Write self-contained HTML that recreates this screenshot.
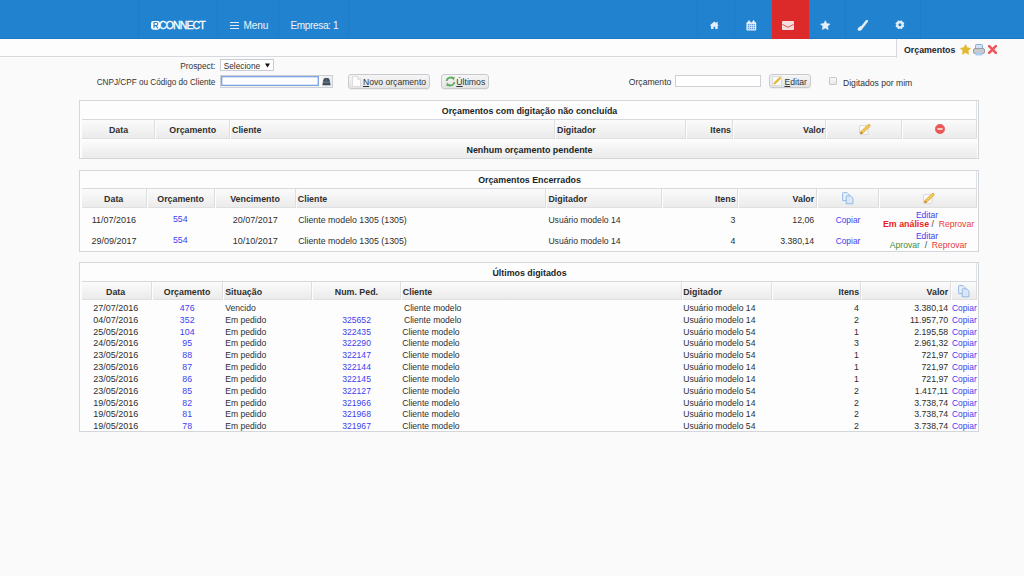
<!DOCTYPE html>
<html><head><meta charset="utf-8"><title>Orçamentos</title>
<style>
html,body{margin:0;padding:0}
body{width:1024px;height:576px;overflow:hidden;position:relative;background:#fafafa;font-family:"Liberation Sans",sans-serif;color:#2e2e2e}
.a{position:absolute;white-space:nowrap;margin:0}
u{text-decoration:underline}
</style></head><body>
<div class="a" style="left:0px;top:0px;width:1024px;height:39px;background:#2183cf"></div>
<div class="a" style="left:0px;top:38px;width:1024px;height:1px;background:#1c78c4"></div>
<div class="a" style="left:138px;top:0px;width:1px;height:38px;background:#1e7dc8"></div>
<div class="a" style="left:217px;top:0px;width:1px;height:38px;background:#1e7dc8"></div>
<div class="a" style="left:278px;top:0px;width:1px;height:38px;background:#1e7dc8"></div>
<div class="a" style="left:348px;top:0px;width:1px;height:38px;background:#1e7dc8"></div>
<div class="a" style="left:697px;top:0px;width:1px;height:38px;background:#1e7dc8"></div>
<div class="a" style="left:734px;top:0px;width:1px;height:38px;background:#1e7dc8"></div>
<div class="a" style="left:845px;top:0px;width:1px;height:38px;background:#1e7dc8"></div>
<div class="a" style="left:920px;top:0px;width:1px;height:38px;background:#1e7dc8"></div>
<div class="a" style="left:772px;top:0px;width:37px;height:39px;background:#dc2a2a"></div>
<svg class="a" style="left:151px;top:20.8px" width="9" height="9" viewBox="0 0 9 9"><rect x="0" y="0" width="9" height="8.7" rx="2.4" fill="#fff"/><path d="M3 7.3 V1.5 H5.1 Q6.8 1.5 6.8 3.1 Q6.8 4.6 5.1 4.6 H3 M5 4.6 L6.9 7.3" stroke="#2183cf" stroke-width="1.15" fill="none"/></svg>
<div class="a" style="top:19.30px;font-size:10.60px;line-height:12px;color:#fff;left:159.00px;letter-spacing:-0.95px;-webkit-text-stroke:0.3px #fff;">CONNECT</div>
<div class="a" style="left:229.5px;top:21.9px;width:9.2px;height:1.3px;background:#dfeaf6"></div>
<div class="a" style="left:229.5px;top:24.9px;width:9.2px;height:1.3px;background:#dfeaf6"></div>
<div class="a" style="left:229.5px;top:27.9px;width:9.2px;height:1.3px;background:#dfeaf6"></div>
<div class="a" style="top:19.50px;font-size:10.10px;line-height:12px;color:#eef3f9;left:243.50px;letter-spacing:-0.15px;">Menu</div>
<div class="a" style="top:19.50px;font-size:10.10px;line-height:12px;color:#eef3f9;left:290.50px;letter-spacing:-0.4px;">Empresa: 1</div>
<svg class="a" style="left:709px;top:21px" width="10" height="9" viewBox="0 0 10 9"><path d="M0.6 4.5 L5.3 0.5 L9.8 4.5 L8.7 4.5 L8.7 8 L6.2 8 L6.2 5.8 L4.5 5.8 L4.5 8 L2 8 L2 4.5 Z" fill="#e4eef8"/><rect x="7.2" y="1" width="1.4" height="2.6" fill="#e4eef8"/></svg>
<svg class="a" style="left:746px;top:20px" width="11" height="11" viewBox="0 0 11 11"><rect x="0.4" y="2.4" width="9.8" height="8.2" rx="0.8" fill="#e4eef8"/><path d="M1.2 3 L3 0.4 L4.8 3 Z M5.8 3 L7.6 0.4 L9.4 3 Z" fill="#e4eef8" stroke="#e4eef8" stroke-width="0.8" stroke-linejoin="round"/><g fill="#5a9be0"><rect x="1.75" y="3.95" width="1.3" height="1.3"/><rect x="1.75" y="5.95" width="1.3" height="1.3"/><rect x="1.75" y="7.95" width="1.3" height="1.3"/><rect x="3.65" y="3.95" width="1.3" height="1.3"/><rect x="3.65" y="5.95" width="1.3" height="1.3"/><rect x="3.65" y="7.95" width="1.3" height="1.3"/><rect x="5.65" y="3.95" width="1.3" height="1.3"/><rect x="5.65" y="5.95" width="1.3" height="1.3"/><rect x="5.65" y="7.95" width="1.3" height="1.3"/><rect x="7.65" y="3.95" width="1.3" height="1.3"/><rect x="7.65" y="5.95" width="1.3" height="1.3"/><rect x="7.65" y="7.95" width="1.3" height="1.3"/></g></svg>
<svg class="a" style="left:782px;top:21px" width="12" height="9" viewBox="0 0 12 9"><rect x="0" y="0" width="12" height="9" rx="1" fill="#f6dede"/><path d="M0.4 3.4 L6.2 6.3 L11.6 3.4" stroke="#e25050" stroke-width="1" fill="none"/></svg>
<svg class="a" style="left:820px;top:20.3px" width="11" height="11" viewBox="0 0 11 11"><path d="M5.30 0.70 L6.77 3.58 L9.96 4.09 L7.68 6.37 L8.18 9.56 L5.30 8.10 L2.42 9.56 L2.92 6.37 L0.64 4.09 L3.83 3.58 Z" fill="#e4eef8" stroke="#e4eef8" stroke-width="0.6" stroke-linejoin="round"/></svg>
<svg class="a" style="left:857px;top:20px" width="11" height="11" viewBox="0 0 11 11"><path d="M9.9 1.1 L5.6 6.6" stroke="#e4eef8" stroke-width="2.5" stroke-linecap="round"/><ellipse cx="3.3" cy="8.4" rx="2.9" ry="1.9" transform="rotate(-38 3.3 8.4)" fill="#e4eef8"/></svg>
<svg class="a" style="left:895px;top:20px" width="10" height="10" viewBox="0 0 10 10"><g transform="translate(4.9 4.75)"><circle r="3.7" fill="#e4eef8"/><rect x="-0.95" y="-4.45" width="1.9" height="1.4" rx="0.5" fill="#e4eef8" transform="rotate(22)"/><rect x="-0.95" y="-4.45" width="1.9" height="1.4" rx="0.5" fill="#e4eef8" transform="rotate(67)"/><rect x="-0.95" y="-4.45" width="1.9" height="1.4" rx="0.5" fill="#e4eef8" transform="rotate(112)"/><rect x="-0.95" y="-4.45" width="1.9" height="1.4" rx="0.5" fill="#e4eef8" transform="rotate(157)"/><rect x="-0.95" y="-4.45" width="1.9" height="1.4" rx="0.5" fill="#e4eef8" transform="rotate(202)"/><rect x="-0.95" y="-4.45" width="1.9" height="1.4" rx="0.5" fill="#e4eef8" transform="rotate(247)"/><rect x="-0.95" y="-4.45" width="1.9" height="1.4" rx="0.5" fill="#e4eef8" transform="rotate(292)"/><rect x="-0.95" y="-4.45" width="1.9" height="1.4" rx="0.5" fill="#e4eef8" transform="rotate(337)"/><circle r="1.55" fill="#2183cf"/></g></svg>
<div class="a" style="left:0px;top:39px;width:896px;height:17px;background:#fdfdfd"></div>
<div class="a" style="left:0px;top:56px;width:896px;height:1px;background:#d6d9dd"></div>
<div class="a" style="left:0px;top:57px;width:896px;height:1px;background:#fdfdfd"></div>
<div class="a" style="left:896px;top:39px;width:1px;height:19px;background:#d6d9dd"></div>
<div class="a" style="top:44.00px;font-size:8.80px;line-height:12px;font-weight:700;color:#1e2430;left:904.00px;">Orçamentos</div>
<svg class="a" style="left:960px;top:44px" width="11" height="11" viewBox="0 0 11 11"><path d="M5.50 0.60 L7.09 3.72 L10.54 4.26 L8.07 6.73 L8.62 10.19 L5.50 8.60 L2.38 10.19 L2.93 6.73 L0.46 4.26 L3.91 3.72 Z" fill="#e2b934" stroke="#e2b934" stroke-width="0.7" stroke-linejoin="round"/></svg>
<svg class="a" style="left:973px;top:44px" width="12" height="12" viewBox="0 0 12 12"><rect x="2.5" y="0.5" width="7" height="5" rx="1" fill="#cfe2f6" stroke="#6e9fce" stroke-width="0.8"/><rect x="0.5" y="4.5" width="11" height="5" rx="1.5" fill="#c6c9cd" stroke="#8a8f95" stroke-width="0.8"/><rect x="2.5" y="9" width="7" height="2.5" fill="#a9cdf0"/></svg>
<svg class="a" style="left:988px;top:45px" width="9" height="9" viewBox="0 0 9 9"><path d="M1.2 1.2 L7.8 7.8 M7.8 1.2 L1.2 7.8" stroke="#f2545c" stroke-width="2.6" stroke-linecap="square"/></svg>
<div class="a" style="top:60.00px;font-size:8.30px;line-height:12px;color:#333;right:808.70px;">Prospect:</div>
<div class="a" style="left:220px;top:59px;width:54px;height:12px;background:#fff;border:1px solid #c9ccd0;box-sizing:border-box"></div>
<div class="a" style="top:60.00px;font-size:8.30px;line-height:12px;left:223.70px;">Selecione</div>
<svg class="a" style="left:265px;top:63px" width="5" height="5" viewBox="0 0 5 5"><path d="M0 0.5 H5 L2.5 4.5 Z" fill="#111"/></svg>
<div class="a" style="top:76.50px;font-size:8.20px;line-height:12px;color:#333;right:808.60px;">CNPJ/CPF ou Código do Cliente</div>
<div class="a" style="left:220px;top:75px;width:113px;height:13px;background:linear-gradient(90deg,#fbfbfb 0,#fbfbfb 2px,#efefef 2px);border:1px solid #cdd0d4;box-sizing:border-box"></div>
<div class="a" style="left:221px;top:76px;width:98px;height:10px;background:#fff;border:1px solid #7ea6e0;box-shadow:inset 0 0 0 0.6px #a9c4ee;box-sizing:border-box"></div>
<div class="a" style="left:319px;top:76px;width:3px;height:11px;background:#fbfbfb"></div>
<svg class="a" style="left:322px;top:77px" width="9" height="9" viewBox="0 0 9 9"><path d="M1.2 3.4 Q1.6 1 3.6 1 L5.4 1 Q7.4 1 7.8 3.4 L8.6 8.2 L0.4 8.2 Z" fill="#3f4b5a"/><rect x="0.9" y="4.6" width="7.2" height="1.1" fill="#6f8aa0"/><rect x="3.8" y="2" width="1.4" height="5" fill="#55677a"/></svg>
<div class="a" style="left:348px;top:74px;width:82px;height:15px;box-sizing:border-box;border:1px solid #c8cacc;border-radius:3px;background:linear-gradient(#f6f6f6,#e4e4e4);box-shadow:0 1px 0 #eee"></div>
<svg class="a" style="left:352px;top:76px" width="9" height="11" viewBox="0 0 9 11"><path d="M0.5 0.5 H5.6 L8.5 3.4 V10.5 H0.5 Z" fill="#fdfdfd" stroke="#d9d9d9" stroke-width="0.9"/><path d="M5.6 0.5 V3.4 H8.5" fill="#eee" stroke="#d9d9d9" stroke-width="0.8"/></svg>
<div class="a" style="top:76.00px;font-size:8.60px;line-height:12px;color:#333;left:363.00px;"><u>N</u>ovo orçamento</div>
<div class="a" style="left:441px;top:74px;width:48px;height:15px;box-sizing:border-box;border:1px solid #c8cacc;border-radius:3px;background:linear-gradient(#f6f6f6,#e4e4e4);box-shadow:0 1px 0 #eee"></div>
<svg class="a" style="left:445px;top:76px" width="11" height="11" viewBox="0 0 11 11"><path d="M1.6 5 A3.8 3.8 0 0 1 7.8 2.4" stroke="#62b062" stroke-width="2" fill="none"/><path d="M6.2 0.4 L10 1.2 L8.6 4.8 Z" fill="#62b062"/><path d="M9.4 6 A3.8 3.8 0 0 1 3.2 8.6" stroke="#62b062" stroke-width="2" fill="none"/><path d="M4.8 10.6 L1 9.8 L2.4 6.2 Z" fill="#62b062"/></svg>
<div class="a" style="top:76.00px;font-size:8.70px;line-height:12px;color:#333;left:456.30px;"><u>Ú</u>ltimos</div>
<div class="a" style="top:76.00px;font-size:8.60px;line-height:12px;color:#333;right:352.70px;">Orçamento</div>
<div class="a" style="left:675px;top:75px;width:86px;height:12px;background:#fff;border:1px solid #cdd0d4;box-sizing:border-box"></div>
<div class="a" style="left:769px;top:74px;width:42px;height:14px;box-sizing:border-box;border:1px solid #c8cacc;border-radius:3px;background:linear-gradient(#f6f6f6,#e4e4e4);box-shadow:0 1px 0 #eee"></div>
<svg class="a" style="left:772px;top:76px" width="10" height="10" viewBox="0 0 10 10"><rect x="0.5" y="0.5" width="9" height="9" fill="#fbfbfb" stroke="#d6d6d6" stroke-width="0.8"/><path d="M2 8 L8.5 1.5" stroke="#e5b93a" stroke-width="2.4"/></svg>
<div class="a" style="top:75.50px;font-size:8.60px;line-height:12px;color:#333;left:784.50px;"><u>E</u>ditar</div>
<div class="a" style="left:829px;top:77px;width:8px;height:8px;background:linear-gradient(#fafafa,#e8e8e8);border:1px solid #c8c8c8;border-radius:1px;box-sizing:border-box"></div>
<div class="a" style="top:77.00px;font-size:8.60px;line-height:12px;color:#333;left:843.00px;">Digitados por mim</div>
<div class="a" style="left:79px;top:100px;width:900px;height:59px;background:#fdfdfd;border:1px solid #d3d7dc;box-sizing:border-box"></div>
<div class="a" style="left:82px;top:101px;width:895px;height:19px;background:#fdfdfd;border-right:1px solid #dfe2e6;border-bottom:1px solid #d6dade;box-sizing:border-box"></div>
<div class="a" style="top:105.00px;font-size:8.85px;line-height:12px;font-weight:700;color:#1b1f26;left:229.50px;width:600px;text-align:center;">Orçamentos com digitação não concluída</div>
<div class="a" style="left:82px;top:120px;width:73px;height:19px;background:linear-gradient(#fbfbfb,#ebebeb);border-right:1px solid #dedede;border-bottom:1px solid #e0e0e0;box-sizing:border-box"></div>
<div class="a" style="left:156px;top:120px;width:74px;height:19px;background:linear-gradient(#fbfbfb,#ebebeb);border-right:1px solid #dedede;border-bottom:1px solid #e0e0e0;box-sizing:border-box"></div>
<div class="a" style="left:231px;top:120px;width:324px;height:19px;background:linear-gradient(#fbfbfb,#ebebeb);border-right:1px solid #dedede;border-bottom:1px solid #e0e0e0;box-sizing:border-box"></div>
<div class="a" style="left:556px;top:120px;width:130px;height:19px;background:linear-gradient(#fbfbfb,#ebebeb);border-right:1px solid #dedede;border-bottom:1px solid #e0e0e0;box-sizing:border-box"></div>
<div class="a" style="left:687px;top:120px;width:46px;height:19px;background:linear-gradient(#fbfbfb,#ebebeb);border-right:1px solid #dedede;border-bottom:1px solid #e0e0e0;box-sizing:border-box"></div>
<div class="a" style="left:734px;top:120px;width:92px;height:19px;background:linear-gradient(#fbfbfb,#ebebeb);border-right:1px solid #dedede;border-bottom:1px solid #e0e0e0;box-sizing:border-box"></div>
<div class="a" style="left:827px;top:120px;width:75px;height:19px;background:linear-gradient(#fbfbfb,#ebebeb);border-right:1px solid #dedede;border-bottom:1px solid #e0e0e0;box-sizing:border-box"></div>
<div class="a" style="left:903px;top:120px;width:74px;height:19px;background:linear-gradient(#fbfbfb,#ebebeb);border-right:1px solid #dedede;border-bottom:1px solid #e0e0e0;box-sizing:border-box"></div>
<div class="a" style="top:124.00px;font-size:8.85px;line-height:12px;font-weight:700;left:-181.50px;width:600px;text-align:center;">Data</div>
<div class="a" style="top:124.00px;font-size:8.85px;line-height:12px;font-weight:700;left:-107.30px;width:600px;text-align:center;">Orçamento</div>
<div class="a" style="top:124.00px;font-size:8.85px;line-height:12px;font-weight:700;left:232.00px;">Cliente</div>
<div class="a" style="top:124.00px;font-size:8.85px;line-height:12px;font-weight:700;left:557.00px;">Digitador</div>
<div class="a" style="top:124.00px;font-size:8.85px;line-height:12px;font-weight:700;right:293.00px;">Itens</div>
<div class="a" style="top:124.00px;font-size:8.85px;line-height:12px;font-weight:700;right:199.40px;">Valor</div>
<svg class="a" style="left:858.5px;top:124px" width="12" height="11" viewBox="0 0 12 11"><rect x="0.5" y="1.5" width="8.5" height="9" rx="0.8" fill="#f9f9f9" stroke="#d3d3d3" stroke-width="0.8"/><path d="M2.8 8.4 L9.9 1.6" stroke="#e3a93a" stroke-width="3.2" stroke-linecap="round"/><path d="M2.8 8.4 L9.9 1.6" stroke="#f2cf5a" stroke-width="1.6" stroke-linecap="round"/><path d="M1.6 9.6 L2.9 8.3" stroke="#b07a40" stroke-width="1.6"/></svg>
<svg class="a" style="left:935px;top:124.4px" width="10" height="10" viewBox="0 0 10 10"><circle cx="5" cy="5" r="4.7" fill="#ee5555"/><circle cx="5" cy="5" r="4.7" fill="none" stroke="#d84040" stroke-width="0.5"/><rect x="2.4" y="4.2" width="5.2" height="1.6" fill="#fbeaea"/></svg>
<div class="a" style="left:82px;top:140px;width:895px;height:18px;background:linear-gradient(#fcfcfc,#ebebeb)"></div>
<div class="a" style="top:143.50px;font-size:8.95px;line-height:12px;font-weight:700;color:#1b1f26;left:229.50px;width:600px;text-align:center;">Nenhum orçamento pendente</div>
<div class="a" style="left:79px;top:170px;width:900px;height:82px;background:#fdfdfd;border:1px solid #d3d7dc;box-sizing:border-box"></div>
<div class="a" style="left:82px;top:171px;width:895px;height:18px;background:#fdfdfd;border-right:1px solid #dfe2e6;border-bottom:1px solid #d6dade;box-sizing:border-box"></div>
<div class="a" style="top:174.00px;font-size:8.85px;line-height:12px;font-weight:700;color:#1b1f26;left:229.50px;width:600px;text-align:center;">Orçamentos Encerrados</div>
<div class="a" style="left:82px;top:189px;width:65px;height:19px;background:linear-gradient(#fbfbfb,#ebebeb);border-right:1px solid #dedede;border-bottom:1px solid #e0e0e0;box-sizing:border-box"></div>
<div class="a" style="left:148px;top:189px;width:67px;height:19px;background:linear-gradient(#fbfbfb,#ebebeb);border-right:1px solid #dedede;border-bottom:1px solid #e0e0e0;box-sizing:border-box"></div>
<div class="a" style="left:216px;top:189px;width:80px;height:19px;background:linear-gradient(#fbfbfb,#ebebeb);border-right:1px solid #dedede;border-bottom:1px solid #e0e0e0;box-sizing:border-box"></div>
<div class="a" style="left:297px;top:189px;width:249px;height:19px;background:linear-gradient(#fbfbfb,#ebebeb);border-right:1px solid #dedede;border-bottom:1px solid #e0e0e0;box-sizing:border-box"></div>
<div class="a" style="left:547px;top:189px;width:115px;height:19px;background:linear-gradient(#fbfbfb,#ebebeb);border-right:1px solid #dedede;border-bottom:1px solid #e0e0e0;box-sizing:border-box"></div>
<div class="a" style="left:663px;top:189px;width:75px;height:19px;background:linear-gradient(#fbfbfb,#ebebeb);border-right:1px solid #dedede;border-bottom:1px solid #e0e0e0;box-sizing:border-box"></div>
<div class="a" style="left:739px;top:189px;width:78px;height:19px;background:linear-gradient(#fbfbfb,#ebebeb);border-right:1px solid #dedede;border-bottom:1px solid #e0e0e0;box-sizing:border-box"></div>
<div class="a" style="left:818px;top:189px;width:61px;height:19px;background:linear-gradient(#fbfbfb,#ebebeb);border-right:1px solid #dedede;border-bottom:1px solid #e0e0e0;box-sizing:border-box"></div>
<div class="a" style="left:880px;top:189px;width:97px;height:19px;background:linear-gradient(#fbfbfb,#ebebeb);border-right:1px solid #dedede;border-bottom:1px solid #e0e0e0;box-sizing:border-box"></div>
<div class="a" style="top:193.00px;font-size:8.85px;line-height:12px;font-weight:700;left:-186.30px;width:600px;text-align:center;">Data</div>
<div class="a" style="top:193.00px;font-size:8.85px;line-height:12px;font-weight:700;left:-119.40px;width:600px;text-align:center;">Orçamento</div>
<div class="a" style="top:193.00px;font-size:8.85px;line-height:12px;font-weight:700;left:-45.00px;width:600px;text-align:center;">Vencimento</div>
<div class="a" style="top:193.00px;font-size:8.85px;line-height:12px;font-weight:700;left:297.80px;">Cliente</div>
<div class="a" style="top:193.00px;font-size:8.85px;line-height:12px;font-weight:700;left:548.40px;">Digitador</div>
<div class="a" style="top:193.00px;font-size:8.85px;line-height:12px;font-weight:700;right:288.40px;">Itens</div>
<div class="a" style="top:193.00px;font-size:8.85px;line-height:12px;font-weight:700;right:209.80px;">Valor</div>
<svg class="a" style="left:842px;top:192px" width="12" height="13" viewBox="0 0 12 13"><path d="M0.6 1.2 Q0.6 0.6 1.2 0.6 H5 L7.4 3 V8.6 H0.6 Z" fill="#e6effa" stroke="#8fb4e3" stroke-width="0.9"/><path d="M4.2 4.4 Q4.2 3.8 4.8 3.8 H8.6 L11 6.2 V11.8 H4.2 Z" fill="#d9e7f8" stroke="#8fb4e3" stroke-width="0.9"/></svg>
<svg class="a" style="left:923.0px;top:193px" width="12" height="11" viewBox="0 0 12 11"><rect x="0.5" y="1.5" width="8.5" height="9" rx="0.8" fill="#f9f9f9" stroke="#d3d3d3" stroke-width="0.8"/><path d="M2.8 8.4 L9.9 1.6" stroke="#e3a93a" stroke-width="3.2" stroke-linecap="round"/><path d="M2.8 8.4 L9.9 1.6" stroke="#f2cf5a" stroke-width="1.6" stroke-linecap="round"/><path d="M1.6 9.6 L2.9 8.3" stroke="#b07a40" stroke-width="1.6"/></svg>
<div class="a" style="top:214.00px;font-size:9.00px;line-height:12px;left:-186.10px;width:600px;text-align:center;">11/07/2016</div>
<div class="a" style="top:213.00px;font-size:8.80px;line-height:12px;color:#3d3df2;left:-119.70px;width:600px;text-align:center;">554</div>
<div class="a" style="top:214.00px;font-size:9.00px;line-height:12px;left:-44.80px;width:600px;text-align:center;">20/07/2017</div>
<div class="a" style="top:214.00px;font-size:8.80px;line-height:12px;left:298.20px;">Cliente modelo 1305 (1305)</div>
<div class="a" style="top:214.00px;font-size:8.60px;line-height:12px;left:548.40px;">Usuário modelo 14</div>
<div class="a" style="top:214.00px;font-size:8.80px;line-height:12px;right:288.50px;">3</div>
<div class="a" style="top:214.00px;font-size:8.75px;line-height:12px;right:209.80px;">12,06</div>
<div class="a" style="top:214.00px;font-size:8.40px;line-height:12px;color:#3d3df2;left:548.00px;width:600px;text-align:center;">Copiar</div>
<div class="a" style="top:209.00px;font-size:8.50px;line-height:12px;color:#3d3df2;left:627.00px;width:600px;text-align:center;">Editar</div>
<div class="a" style="left:628.5px;width:600px;text-align:center;top:217.50px;font-size:8.6px;line-height:12px;color:#e83a3a"><b style="color:#ee1c1c;font-size:8.85px">Em análise</b> <span style="color:#444">/</span>&nbsp; Reprovar</div>
<div class="a" style="top:235.00px;font-size:9.00px;line-height:12px;left:-186.10px;width:600px;text-align:center;">29/09/2017</div>
<div class="a" style="top:234.00px;font-size:8.80px;line-height:12px;color:#3d3df2;left:-119.70px;width:600px;text-align:center;">554</div>
<div class="a" style="top:235.00px;font-size:9.00px;line-height:12px;left:-44.80px;width:600px;text-align:center;">10/10/2017</div>
<div class="a" style="top:235.00px;font-size:8.80px;line-height:12px;left:298.20px;">Cliente modelo 1305 (1305)</div>
<div class="a" style="top:235.00px;font-size:8.60px;line-height:12px;left:548.40px;">Usuário modelo 14</div>
<div class="a" style="top:235.00px;font-size:8.80px;line-height:12px;right:288.50px;">4</div>
<div class="a" style="top:235.00px;font-size:8.75px;line-height:12px;right:209.80px;">3.380,14</div>
<div class="a" style="top:235.00px;font-size:8.40px;line-height:12px;color:#3d3df2;left:548.00px;width:600px;text-align:center;">Copiar</div>
<div class="a" style="top:230.00px;font-size:8.50px;line-height:12px;color:#3d3df2;left:627.00px;width:600px;text-align:center;">Editar</div>
<div class="a" style="left:628.5px;width:600px;text-align:center;top:238.50px;font-size:8.6px;line-height:12px;color:#e83a3a"><span style="color:#3f8f3f">Aprovar</span>&nbsp; <span style="color:#444">/</span>&nbsp; Reprovar</div>
<div class="a" style="left:79px;top:262px;width:900px;height:170px;background:#fdfdfd;border:1px solid #d3d7dc;box-sizing:border-box"></div>
<div class="a" style="left:82px;top:263px;width:895px;height:19px;background:#fdfdfd;border-right:1px solid #dfe2e6;border-bottom:1px solid #d6dade;box-sizing:border-box"></div>
<div class="a" style="top:267.00px;font-size:8.85px;line-height:12px;font-weight:700;color:#1b1f26;left:229.50px;width:600px;text-align:center;">Últimos digitados</div>
<div class="a" style="left:82px;top:282px;width:70px;height:18px;background:linear-gradient(#fbfbfb,#ebebeb);border-right:1px solid #dedede;border-bottom:1px solid #e0e0e0;box-sizing:border-box"></div>
<div class="a" style="left:153px;top:282px;width:70px;height:18px;background:linear-gradient(#fbfbfb,#ebebeb);border-right:1px solid #dedede;border-bottom:1px solid #e0e0e0;box-sizing:border-box"></div>
<div class="a" style="left:224px;top:282px;width:88px;height:18px;background:linear-gradient(#fbfbfb,#ebebeb);border-right:1px solid #dedede;border-bottom:1px solid #e0e0e0;box-sizing:border-box"></div>
<div class="a" style="left:313px;top:282px;width:88px;height:18px;background:linear-gradient(#fbfbfb,#ebebeb);border-right:1px solid #dedede;border-bottom:1px solid #e0e0e0;box-sizing:border-box"></div>
<div class="a" style="left:402px;top:282px;width:280px;height:18px;background:linear-gradient(#fbfbfb,#ebebeb);border-right:1px solid #dedede;border-bottom:1px solid #e0e0e0;box-sizing:border-box"></div>
<div class="a" style="left:683px;top:282px;width:89px;height:18px;background:linear-gradient(#fbfbfb,#ebebeb);border-right:1px solid #dedede;border-bottom:1px solid #e0e0e0;box-sizing:border-box"></div>
<div class="a" style="left:773px;top:282px;width:88px;height:18px;background:linear-gradient(#fbfbfb,#ebebeb);border-right:1px solid #dedede;border-bottom:1px solid #e0e0e0;box-sizing:border-box"></div>
<div class="a" style="left:862px;top:282px;width:89px;height:18px;background:linear-gradient(#fbfbfb,#ebebeb);border-right:1px solid #dedede;border-bottom:1px solid #e0e0e0;box-sizing:border-box"></div>
<div class="a" style="left:952px;top:282px;width:25px;height:18px;background:linear-gradient(#fbfbfb,#ebebeb);border-right:1px solid #dedede;border-bottom:1px solid #e0e0e0;box-sizing:border-box"></div>
<div class="a" style="top:286.00px;font-size:8.85px;line-height:12px;font-weight:700;left:-184.40px;width:600px;text-align:center;">Data</div>
<div class="a" style="top:286.00px;font-size:8.85px;line-height:12px;font-weight:700;left:-112.90px;width:600px;text-align:center;">Orçamento</div>
<div class="a" style="top:286.00px;font-size:8.85px;line-height:12px;font-weight:700;left:225.20px;">Situação</div>
<div class="a" style="top:286.00px;font-size:8.85px;line-height:12px;font-weight:700;left:56.40px;width:600px;text-align:center;">Num. Ped.</div>
<div class="a" style="top:286.00px;font-size:8.85px;line-height:12px;font-weight:700;left:402.80px;">Cliente</div>
<div class="a" style="top:286.00px;font-size:8.85px;line-height:12px;font-weight:700;left:683.20px;">Digitador</div>
<div class="a" style="top:286.00px;font-size:8.85px;line-height:12px;font-weight:700;right:164.80px;">Itens</div>
<div class="a" style="top:286.00px;font-size:8.85px;line-height:12px;font-weight:700;right:75.80px;">Valor</div>
<svg class="a" style="left:957.5px;top:285px" width="12" height="13" viewBox="0 0 12 13"><path d="M0.6 1.2 Q0.6 0.6 1.2 0.6 H5 L7.4 3 V8.6 H0.6 Z" fill="#e6effa" stroke="#8fb4e3" stroke-width="0.9"/><path d="M4.2 4.4 Q4.2 3.8 4.8 3.8 H8.6 L11 6.2 V11.8 H4.2 Z" fill="#d9e7f8" stroke="#8fb4e3" stroke-width="0.9"/></svg>
<div class="a" style="top:301.60px;font-size:9.00px;line-height:12px;left:-184.20px;width:600px;text-align:center;">27/07/2016</div>
<div class="a" style="top:301.60px;font-size:8.80px;line-height:12px;color:#3d3df2;left:-112.80px;width:600px;text-align:center;">476</div>
<div class="a" style="top:301.60px;font-size:8.60px;line-height:12px;left:225.20px;">Vencido</div>
<div class="a" style="top:301.60px;font-size:8.60px;line-height:12px;left:404.00px;">Cliente modelo</div>
<div class="a" style="top:301.60px;font-size:8.60px;line-height:12px;left:683.30px;">Usuário modelo 14</div>
<div class="a" style="top:301.60px;font-size:8.80px;line-height:12px;right:165.00px;">4</div>
<div class="a" style="top:301.60px;font-size:8.75px;line-height:12px;right:75.80px;">3.380,14</div>
<div class="a" style="top:301.60px;font-size:8.40px;line-height:12px;color:#3d3df2;left:952.00px;">Copiar</div>
<div class="a" style="top:313.60px;font-size:9.00px;line-height:12px;left:-184.20px;width:600px;text-align:center;">04/07/2016</div>
<div class="a" style="top:313.60px;font-size:8.80px;line-height:12px;color:#3d3df2;left:-112.80px;width:600px;text-align:center;">352</div>
<div class="a" style="top:313.60px;font-size:8.60px;line-height:12px;left:225.20px;">Em pedido</div>
<div class="a" style="top:313.60px;font-size:8.60px;line-height:12px;color:#3d3df2;left:56.60px;width:600px;text-align:center;">325652</div>
<div class="a" style="top:313.60px;font-size:8.60px;line-height:12px;left:404.00px;">Cliente modelo</div>
<div class="a" style="top:313.60px;font-size:8.60px;line-height:12px;left:683.30px;">Usuário modelo 14</div>
<div class="a" style="top:313.60px;font-size:8.80px;line-height:12px;right:165.00px;">2</div>
<div class="a" style="top:313.60px;font-size:8.75px;line-height:12px;right:75.80px;">11.957,70</div>
<div class="a" style="top:313.60px;font-size:8.40px;line-height:12px;color:#3d3df2;left:952.00px;">Copiar</div>
<div class="a" style="top:325.60px;font-size:9.00px;line-height:12px;left:-184.20px;width:600px;text-align:center;">25/05/2016</div>
<div class="a" style="top:325.60px;font-size:8.80px;line-height:12px;color:#3d3df2;left:-112.80px;width:600px;text-align:center;">104</div>
<div class="a" style="top:325.60px;font-size:8.60px;line-height:12px;left:225.20px;">Em pedido</div>
<div class="a" style="top:325.60px;font-size:8.60px;line-height:12px;color:#3d3df2;left:56.60px;width:600px;text-align:center;">322435</div>
<div class="a" style="top:325.60px;font-size:8.60px;line-height:12px;left:402.30px;">Cliente modelo</div>
<div class="a" style="top:325.60px;font-size:8.60px;line-height:12px;left:683.30px;">Usuário modelo 54</div>
<div class="a" style="top:325.60px;font-size:8.80px;line-height:12px;right:165.00px;">1</div>
<div class="a" style="top:325.60px;font-size:8.75px;line-height:12px;right:75.80px;">2.195,58</div>
<div class="a" style="top:325.60px;font-size:8.40px;line-height:12px;color:#3d3df2;left:952.00px;">Copiar</div>
<div class="a" style="top:336.60px;font-size:9.00px;line-height:12px;left:-184.20px;width:600px;text-align:center;">24/05/2016</div>
<div class="a" style="top:336.60px;font-size:8.80px;line-height:12px;color:#3d3df2;left:-112.80px;width:600px;text-align:center;">95</div>
<div class="a" style="top:336.60px;font-size:8.60px;line-height:12px;left:225.20px;">Em pedido</div>
<div class="a" style="top:336.60px;font-size:8.60px;line-height:12px;color:#3d3df2;left:56.60px;width:600px;text-align:center;">322290</div>
<div class="a" style="top:336.60px;font-size:8.60px;line-height:12px;left:402.30px;">Cliente modelo</div>
<div class="a" style="top:336.60px;font-size:8.60px;line-height:12px;left:683.30px;">Usuário modelo 54</div>
<div class="a" style="top:336.60px;font-size:8.80px;line-height:12px;right:165.00px;">3</div>
<div class="a" style="top:336.60px;font-size:8.75px;line-height:12px;right:75.80px;">2.961,32</div>
<div class="a" style="top:336.60px;font-size:8.40px;line-height:12px;color:#3d3df2;left:952.00px;">Copiar</div>
<div class="a" style="top:348.60px;font-size:9.00px;line-height:12px;left:-184.20px;width:600px;text-align:center;">23/05/2016</div>
<div class="a" style="top:348.60px;font-size:8.80px;line-height:12px;color:#3d3df2;left:-112.80px;width:600px;text-align:center;">88</div>
<div class="a" style="top:348.60px;font-size:8.60px;line-height:12px;left:225.20px;">Em pedido</div>
<div class="a" style="top:348.60px;font-size:8.60px;line-height:12px;color:#3d3df2;left:56.60px;width:600px;text-align:center;">322147</div>
<div class="a" style="top:348.60px;font-size:8.60px;line-height:12px;left:402.30px;">Cliente modelo</div>
<div class="a" style="top:348.60px;font-size:8.60px;line-height:12px;left:683.30px;">Usuário modelo 54</div>
<div class="a" style="top:348.60px;font-size:8.80px;line-height:12px;right:165.00px;">1</div>
<div class="a" style="top:348.60px;font-size:8.75px;line-height:12px;right:75.80px;">721,97</div>
<div class="a" style="top:348.60px;font-size:8.40px;line-height:12px;color:#3d3df2;left:952.00px;">Copiar</div>
<div class="a" style="top:360.60px;font-size:9.00px;line-height:12px;left:-184.20px;width:600px;text-align:center;">23/05/2016</div>
<div class="a" style="top:360.60px;font-size:8.80px;line-height:12px;color:#3d3df2;left:-112.80px;width:600px;text-align:center;">87</div>
<div class="a" style="top:360.60px;font-size:8.60px;line-height:12px;left:225.20px;">Em pedido</div>
<div class="a" style="top:360.60px;font-size:8.60px;line-height:12px;color:#3d3df2;left:56.60px;width:600px;text-align:center;">322144</div>
<div class="a" style="top:360.60px;font-size:8.60px;line-height:12px;left:402.30px;">Cliente modelo</div>
<div class="a" style="top:360.60px;font-size:8.60px;line-height:12px;left:683.30px;">Usuário modelo 14</div>
<div class="a" style="top:360.60px;font-size:8.80px;line-height:12px;right:165.00px;">1</div>
<div class="a" style="top:360.60px;font-size:8.75px;line-height:12px;right:75.80px;">721,97</div>
<div class="a" style="top:360.60px;font-size:8.40px;line-height:12px;color:#3d3df2;left:952.00px;">Copiar</div>
<div class="a" style="top:372.60px;font-size:9.00px;line-height:12px;left:-184.20px;width:600px;text-align:center;">23/05/2016</div>
<div class="a" style="top:372.60px;font-size:8.80px;line-height:12px;color:#3d3df2;left:-112.80px;width:600px;text-align:center;">86</div>
<div class="a" style="top:372.60px;font-size:8.60px;line-height:12px;left:225.20px;">Em pedido</div>
<div class="a" style="top:372.60px;font-size:8.60px;line-height:12px;color:#3d3df2;left:56.60px;width:600px;text-align:center;">322145</div>
<div class="a" style="top:372.60px;font-size:8.60px;line-height:12px;left:402.30px;">Cliente modelo</div>
<div class="a" style="top:372.60px;font-size:8.60px;line-height:12px;left:683.30px;">Usuário modelo 14</div>
<div class="a" style="top:372.60px;font-size:8.80px;line-height:12px;right:165.00px;">1</div>
<div class="a" style="top:372.60px;font-size:8.75px;line-height:12px;right:75.80px;">721,97</div>
<div class="a" style="top:372.60px;font-size:8.40px;line-height:12px;color:#3d3df2;left:952.00px;">Copiar</div>
<div class="a" style="top:384.60px;font-size:9.00px;line-height:12px;left:-184.20px;width:600px;text-align:center;">23/05/2016</div>
<div class="a" style="top:384.60px;font-size:8.80px;line-height:12px;color:#3d3df2;left:-112.80px;width:600px;text-align:center;">85</div>
<div class="a" style="top:384.60px;font-size:8.60px;line-height:12px;left:225.20px;">Em pedido</div>
<div class="a" style="top:384.60px;font-size:8.60px;line-height:12px;color:#3d3df2;left:56.60px;width:600px;text-align:center;">322127</div>
<div class="a" style="top:384.60px;font-size:8.60px;line-height:12px;left:402.30px;">Cliente modelo</div>
<div class="a" style="top:384.60px;font-size:8.60px;line-height:12px;left:683.30px;">Usuário modelo 54</div>
<div class="a" style="top:384.60px;font-size:8.80px;line-height:12px;right:165.00px;">2</div>
<div class="a" style="top:384.60px;font-size:8.75px;line-height:12px;right:75.80px;">1.417,11</div>
<div class="a" style="top:384.60px;font-size:8.40px;line-height:12px;color:#3d3df2;left:952.00px;">Copiar</div>
<div class="a" style="top:396.60px;font-size:9.00px;line-height:12px;left:-184.20px;width:600px;text-align:center;">19/05/2016</div>
<div class="a" style="top:396.60px;font-size:8.80px;line-height:12px;color:#3d3df2;left:-112.80px;width:600px;text-align:center;">82</div>
<div class="a" style="top:396.60px;font-size:8.60px;line-height:12px;left:225.20px;">Em pedido</div>
<div class="a" style="top:396.60px;font-size:8.60px;line-height:12px;color:#3d3df2;left:56.60px;width:600px;text-align:center;">321966</div>
<div class="a" style="top:396.60px;font-size:8.60px;line-height:12px;left:402.30px;">Cliente modelo</div>
<div class="a" style="top:396.60px;font-size:8.60px;line-height:12px;left:683.30px;">Usuário modelo 14</div>
<div class="a" style="top:396.60px;font-size:8.80px;line-height:12px;right:165.00px;">2</div>
<div class="a" style="top:396.60px;font-size:8.75px;line-height:12px;right:75.80px;">3.738,74</div>
<div class="a" style="top:396.60px;font-size:8.40px;line-height:12px;color:#3d3df2;left:952.00px;">Copiar</div>
<div class="a" style="top:407.60px;font-size:9.00px;line-height:12px;left:-184.20px;width:600px;text-align:center;">19/05/2016</div>
<div class="a" style="top:407.60px;font-size:8.80px;line-height:12px;color:#3d3df2;left:-112.80px;width:600px;text-align:center;">81</div>
<div class="a" style="top:407.60px;font-size:8.60px;line-height:12px;left:225.20px;">Em pedido</div>
<div class="a" style="top:407.60px;font-size:8.60px;line-height:12px;color:#3d3df2;left:56.60px;width:600px;text-align:center;">321968</div>
<div class="a" style="top:407.60px;font-size:8.60px;line-height:12px;left:402.30px;">Cliente modelo</div>
<div class="a" style="top:407.60px;font-size:8.60px;line-height:12px;left:683.30px;">Usuário modelo 14</div>
<div class="a" style="top:407.60px;font-size:8.80px;line-height:12px;right:165.00px;">2</div>
<div class="a" style="top:407.60px;font-size:8.75px;line-height:12px;right:75.80px;">3.738,74</div>
<div class="a" style="top:407.60px;font-size:8.40px;line-height:12px;color:#3d3df2;left:952.00px;">Copiar</div>
<div class="a" style="top:419.60px;font-size:9.00px;line-height:12px;left:-184.20px;width:600px;text-align:center;">19/05/2016</div>
<div class="a" style="top:419.60px;font-size:8.80px;line-height:12px;color:#3d3df2;left:-112.80px;width:600px;text-align:center;">78</div>
<div class="a" style="top:419.60px;font-size:8.60px;line-height:12px;left:225.20px;">Em pedido</div>
<div class="a" style="top:419.60px;font-size:8.60px;line-height:12px;color:#3d3df2;left:56.60px;width:600px;text-align:center;">321967</div>
<div class="a" style="top:419.60px;font-size:8.60px;line-height:12px;left:402.30px;">Cliente modelo</div>
<div class="a" style="top:419.60px;font-size:8.60px;line-height:12px;left:683.30px;">Usuário modelo 54</div>
<div class="a" style="top:419.60px;font-size:8.80px;line-height:12px;right:165.00px;">2</div>
<div class="a" style="top:419.60px;font-size:8.75px;line-height:12px;right:75.80px;">3.738,74</div>
<div class="a" style="top:419.60px;font-size:8.40px;line-height:12px;color:#3d3df2;left:952.00px;">Copiar</div>
</body></html>
